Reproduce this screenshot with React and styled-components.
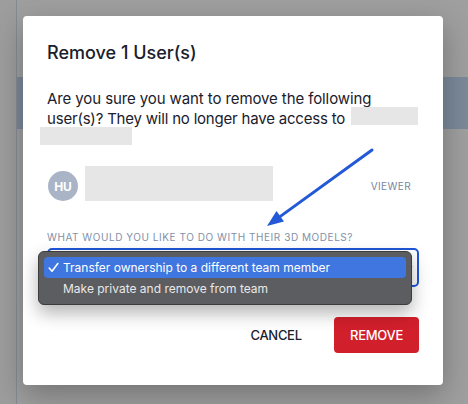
import React from "react";
import styled, { createGlobalStyle } from "styled-components";

const Global = createGlobalStyle`
  html, body { margin: 0; padding: 0; }
  body { font-family: Inter, "Noto Sans", sans-serif; background: #9f9f9f; }
  * { box-sizing: border-box; }
`;

const Page = styled.div`
  position: relative;
  width: 468px;
  height: 404px;
  overflow: hidden;
  background: #9f9f9f;
`;

const Shell = styled.div`
  display: grid;
  grid-template-columns: 17px 1fr;
  height: 100%;
`;

const Sidebar = styled.div`
  border-right: 1px solid #858b95;
  background: #9d9d9d;
`;

const Main = styled.div`
  display: flex;
  flex-direction: column;
  padding-top: 77px;
`;

const Band = styled.div`
  height: 52px;
  background: #7b8999;
`;

const Overlay = styled.div`
  position: absolute;
  inset: 0;
  display: flex;
  align-items: flex-start;
  padding: 16px 0 0 23px;
`;

const Modal = styled.div`
  position: relative;
  width: 420px;
  background: #ffffff;
  border-radius: 4px;
  box-shadow: 0 10px 30px rgba(0, 0, 0, 0.28);
  padding: 24px 24px 32px 24px;
  color: #1a202c;
`;

const Title = styled.h2`
  margin: 0;
  font-size: 18px;
  line-height: 25px;
  font-weight: 500;
  letter-spacing: 0;
`;

const Body = styled.p`
  margin: 24px 0 0 0;
  font-size: 15px;
  line-height: 20px;
  font-weight: 400;
  letter-spacing: -0.1px;
`;

const Line = styled.span`
  display: block;
  white-space: nowrap;
  letter-spacing: ${(p) => p.$ls || "inherit"};
`;

const Redact = styled.span`
  display: inline-block;
  vertical-align: top;
  width: ${(p) => p.$w}px;
  height: 18px;
  margin-left: ${(p) => p.$ml || 0}px;
  margin-top: -2px;
  background: #e6e6e6;
`;

const MemberRow = styled.div`
  margin-top: 17px;
  display: flex;
  align-items: center;
  padding: 0 8px 0 1px;
`;

const Avatar = styled.div`
  width: 30px;
  height: 30px;
  border-radius: 50%;
  background: #a9b4c6;
  color: #fff;
  font-size: 12px;
  font-weight: 700;
  display: flex;
  align-items: center;
  justify-content: center;
  margin-top: 5px;
`;

const NameBox = styled.div`
  width: 188px;
  height: 35px;
  margin-left: 7px;
  background: #e6e6e6;
`;

const Role = styled.span`
  margin-left: auto;
  margin-top: 4px;
  font-size: 10px;
  letter-spacing: 0.4px;
  color: #7686a4;
`;

const Label = styled.div`
  margin-top: 28px;
  font-size: 10px;
  line-height: 16px;
  letter-spacing: 0.55px;
  color: #8190aa;
`;

const SelectWrap = styled.div`
  position: relative;
  margin-top: 3px;
  height: 39px;
  border: 2px solid #1f56d8;
  border-radius: 5px;
  display: flex;
  align-items: center;
  justify-content: flex-end;
  padding-right: 4px;
`;

const Menu = styled.div`
  position: absolute;
  left: -11px;
  top: 1px;
  width: 374px;
  background: #5c5d60;
  border: 1px solid #3b3c3e;
  border-radius: 6px;
  padding: 5px;
  box-shadow: 0 8px 18px rgba(0, 0, 0, 0.3);
`;

const Option = styled.div`
  display: flex;
  align-items: center;
  height: 21px;
  border-radius: 4px;
  background: ${(p) => (p.$active ? "#3f76e0" : "transparent")};
  color: ${(p) => (p.$active ? "#ffffff" : "#e9e9ea")};
  font-size: 12px;
  white-space: nowrap;
`;

const Check = styled.span`
  width: 19px;
  padding-left: 4px;
  display: flex;
  align-items: center;
`;

const Footer = styled.div`
  margin-top: 30px;
  display: flex;
  justify-content: flex-end;
  gap: 16px;
`;

const Button = styled.button`
  height: 36px;
  min-width: 84px;
  padding: 0 16px;
  border: none;
  border-radius: 4px;
  font-family: Inter, "Noto Sans", sans-serif;
  font-size: 13px;
  font-weight: 500;
  letter-spacing: -0.3px;
  background: ${(p) => (p.$danger ? "#d21f2c" : "transparent")};
  color: ${(p) => (p.$danger ? "#ffffff" : "#1a202c")};
`;

const Annotation = styled.svg`
  position: absolute;
  left: 0;
  top: 0;
  pointer-events: none;
`;

export default function App() {
  return (
    <>
      <Global />
      <Page>
        <Shell>
          <Sidebar />
          <Main>
            <Band />
          </Main>
        </Shell>
        <Overlay>
          <Modal>
            <Title>Remove 1 User(s)</Title>
            <Body>
              <Line>Are you sure you want to remove the following</Line>
              <Line $ls="-0.2px">
                user(s)? They will no longer have access to <Redact $w={67} $ml={2} />
              </Line>
              <Line>
                <Redact $w={92} $ml={-7} />
              </Line>
            </Body>
            <MemberRow>
              <Avatar>HU</Avatar>
              <NameBox />
              <Role>VIEWER</Role>
            </MemberRow>
            <Label>WHAT WOULD YOU LIKE TO DO WITH THEIR 3D MODELS?</Label>
            <SelectWrap>
              <svg width="7" height="6" viewBox="0 0 7 6">
                <path d="M0.5 1 L3.5 5 L6.5 1" fill="#333" />
              </svg>
              <Menu>
                <Option $active>
                  <Check>
                    <svg width="11" height="11" viewBox="0 0 11 11">
                      <path
                        d="M1.2 6 L4 9.2 L9.8 1.5"
                        fill="none"
                        stroke="#fff"
                        strokeWidth="1.6"
                        strokeLinecap="round"
                        strokeLinejoin="round"
                      />
                    </svg>
                  </Check>
                  Transfer ownership to a different team member
                </Option>
                <Option>
                  <Check />
                  Make private and remove from team
                </Option>
              </Menu>
            </SelectWrap>
            <Footer>
              <Button>CANCEL</Button>
              <Button $danger>REMOVE</Button>
            </Footer>
            <Annotation width="420" height="370" viewBox="23 16 420 370">
              <line
                x1="372"
                y1="150"
                x2="280"
                y2="216.6"
                stroke="#2358d6"
                strokeWidth="3"
                strokeLinecap="round"
              />
              <polygon points="267,226 284,221.5 276.5,211" fill="#2358d6" />
            </Annotation>
          </Modal>
        </Overlay>
      </Page>
    </>
  );
}
